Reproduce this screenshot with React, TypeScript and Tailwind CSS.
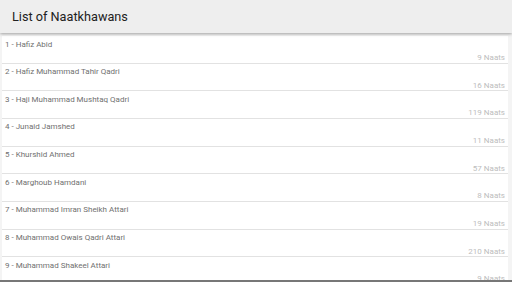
import React from "react";

const items: [string, number][] = [
  ["Hafiz Abid", 9],
  ["Hafiz Muhammad Tahir Qadri", 16],
  ["Haji Muhammad Mushtaq Qadri", 119],
  ["Junaid Jamshed", 11],
  ["Khurshid Ahmed", 57],
  ["Marghoub Hamdani", 8],
  ["Muhammad Imran Sheikh Attari", 19],
  ["Muhammad Owais Qadri Attari", 210],
  ["Muhammad Shakeel Attari", 9],
];

export default function App() {
  return (
    <div className="w-[512px] h-[282px] flex flex-col overflow-hidden bg-[#f4f4f4] border-b-2 border-[#777]" style={{ fontFamily: "Roboto, 'Liberation Sans', sans-serif" }}>
      <div className="h-[33px] shrink-0 bg-[#eeeeee] flex items-center pl-[12px] text-[12.7px] text-[#212121] shadow-[0_1px_3px_rgba(0,0,0,0.35)] z-10">
        List of Naatkhawans
      </div>
      <div className="flex-1 overflow-hidden pl-[2px] pr-[4px] pt-[3px]">
        <div className="bg-white">
          {items.map(([name, n], i) => (
            <div key={i} className="h-[27.67px] border-b border-[#e2e2e2] flex flex-col px-[3px] pt-[3.5px]">
              <div className="text-[8px] leading-[10px] text-[#707070]">{i + 1} - {name}</div>
              <div className="text-[8px] leading-[10px] text-[#bdbdbd] text-right mt-[3.5px]">{n} Naats</div>
            </div>
          ))}
        </div>
      </div>
    </div>
  );
}
